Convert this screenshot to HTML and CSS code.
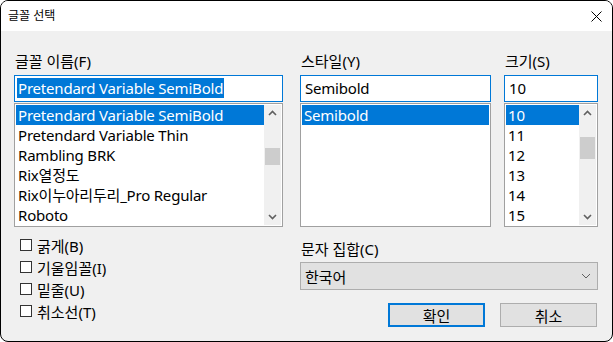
FILE: index.html
```html
<!DOCTYPE html>
<html lang="ko">
<head>
<meta charset="utf-8">
<link rel="stylesheet" href="styles.css">
</head>
<body>
<div class="window">
  <div class="titlebar">
    <span class="title">글꼴 선택</span>
    <svg class="close" width="11" height="11" viewBox="0 0 11 11"><path d="M0.5 0.5 L10.5 10.5 M10.5 0.5 L0.5 10.5" stroke="#000" stroke-width="1" fill="none"/></svg>
  </div>
  <div class="content">
    <div class="top">
      <div class="col col-font">
        <div class="label">글꼴 이름(F)</div>
        <div class="edit"><span class="sel">Pretendard Variable SemiBold</span></div>
        <div class="list">
          <div class="items">
            <div class="item selected">Pretendard Variable SemiBold</div>
            <div class="item">Pretendard Variable Thin</div>
            <div class="item">Rambling BRK</div>
            <div class="item">Rix열정도</div>
            <div class="item">Rix이누아리두리_Pro Regular</div>
            <div class="item">Roboto</div>
          </div>
          <div class="scrollbar">
            <svg class="arrow" width="17" height="17" viewBox="0 0 17 17"><path d="M5 10 L8.5 6.5 L12 10" stroke="#606060" stroke-width="1.6" fill="none"/></svg>
            <div class="track"><div class="thumb thumb-font"></div></div>
            <svg class="arrow" width="17" height="17" viewBox="0 0 17 17"><path d="M5 7 L8.5 10.5 L12 7" stroke="#606060" stroke-width="1.6" fill="none"/></svg>
          </div>
        </div>
      </div>
      <div class="col col-style">
        <div class="label">스타일(Y)</div>
        <div class="edit"><span class="plain">Semibold</span></div>
        <div class="list">
          <div class="items">
            <div class="item selected">Semibold</div>
          </div>
        </div>
      </div>
      <div class="col col-size">
        <div class="label">크기(S)</div>
        <div class="edit"><span class="plain">10</span></div>
        <div class="list">
          <div class="items">
            <div class="item selected">10</div>
            <div class="item">11</div>
            <div class="item">12</div>
            <div class="item">13</div>
            <div class="item">14</div>
            <div class="item">15</div>
          </div>
          <div class="scrollbar">
            <svg class="arrow" width="17" height="17" viewBox="0 0 17 17"><path d="M5 10 L8.5 6.5 L12 10" stroke="#606060" stroke-width="1.6" fill="none"/></svg>
            <div class="track"><div class="thumb thumb-size"></div></div>
            <svg class="arrow" width="17" height="17" viewBox="0 0 17 17"><path d="M5 7 L8.5 10.5 L12 7" stroke="#606060" stroke-width="1.6" fill="none"/></svg>
          </div>
        </div>
      </div>
    </div>
    <div class="bottom">
      <div class="checks">
        <div class="check"><span class="box"></span>굵게(B)</div>
        <div class="check"><span class="box"></span>기울임꼴(I)</div>
        <div class="check"><span class="box"></span>밑줄(U)</div>
        <div class="check"><span class="box"></span>취소선(T)</div>
      </div>
      <div class="right">
        <div class="label">문자 집합(C)</div>
        <div class="combo">
          <span>한국어</span>
          <svg width="10" height="6" viewBox="0 0 10 6"><path d="M1 1 L5 5 L9 1" stroke="#606060" stroke-width="1" fill="none"/></svg>
        </div>
        <div class="buttons">
          <div class="btn default">확인</div>
          <div class="btn">취소</div>
        </div>
      </div>
    </div>
  </div>
</div>
</body>
</html>
```

FILE: styles.css
```css
* { box-sizing: border-box; }
html, body { margin: 0; padding: 0; background: #ffffff; }
body {
  font-family: "Noto Sans", "Noto Sans CJK KR", sans-serif;
  font-size: 15px;
  color: #000;
}
.window {
  width: 613px;
  height: 342px;
  border: 1px solid #000;
  border-radius: 8px;
  overflow: hidden;
  background: #f0f0f0;
  display: flex;
  flex-direction: column;
}
.titlebar {
  height: 30px;
  background: #fff;
  display: flex;
  align-items: center;
  justify-content: space-between;
  padding: 0 10px 0 7px;
  flex: none;
}
.title { font-size: 12px; line-height: 16px; }
.close { margin-top: 1px; }
.content {
  padding: 20px 0 0 13px;
}
.top { display: flex; }
.col { display: flex; flex-direction: column; }
.col-font { width: 269px; margin-right: 17px; }
.col-style { width: 191px; margin-right: 13px; }
.col-size { width: 94px; }
.label {
  line-height: 20px;
  height: 20px;
  padding-left: 1px;
  margin-bottom: 4px;
  white-space: nowrap;
}
.edit {
  height: 27px;
  background: #fff;
  border: 1px solid #0078d7;
  padding: 2px 0 0 2px;
  white-space: nowrap;
  overflow: hidden;
  letter-spacing: -0.2px;
}
.sel {
  display: inline-block;
  background: #0078d7;
  color: #fff;
  line-height: 20px;
  padding: 0 1px;
}
.plain {
  display: inline-block;
  line-height: 20px;
  padding-left: 2px;
}
.list {
  margin-top: 1px;
  height: 124px;
  background: #fff;
  border: 1px solid #a0a0a0;
  padding: 1px;
  display: flex;
}
.items { flex: 1; min-width: 0; letter-spacing: -0.2px; }
.item {
  height: 20px;
  line-height: 20px;
  padding-left: 2px;
  white-space: nowrap;
  overflow: hidden;
}
.item.selected { background: #0078d7; color: #fff; }
.scrollbar {
  width: 17px;
  background: #f0f0f0;
  display: flex;
  flex-direction: column;
}
.arrow { display: block; flex: none; }
.track { flex: 1; position: relative; }
.thumb {
  position: absolute;
  left: 1px;
  right: 1px;
  background: #cdcdcd;
}
.thumb-font { top: 26px; height: 17px; }
.thumb-size { top: 15px; height: 22px; }
.bottom { display: flex; }
.checks {
  width: 286px;
  padding: 7px 0 0 6px;
}
.check {
  height: 22px;
  display: flex;
  align-items: center;
  white-space: nowrap;
}
.box {
  width: 12px;
  height: 12px;
  border: 1px solid #333;
  background: #fff;
  margin-right: 5px;
  flex: none;
}
.right {
  width: 298px;
  padding-top: 12px;
}
.right .label { margin-bottom: 3px; }
.combo {
  height: 28px;
  background: #e1e1e1;
  border: 1px solid #adadad;
  display: flex;
  align-items: center;
  justify-content: space-between;
  padding: 0 6px 0 4px;
}
.buttons {
  display: flex;
  justify-content: flex-end;
  gap: 15px;
  margin-top: 13px;
  padding-right: 1px;
}
.btn {
  width: 97px;
  height: 24px;
  background: #e1e1e1;
  border: 1px solid #adadad;
  display: flex;
  align-items: center;
  justify-content: center;
}
.btn.default { border: 2px solid #0078d7; }
```
